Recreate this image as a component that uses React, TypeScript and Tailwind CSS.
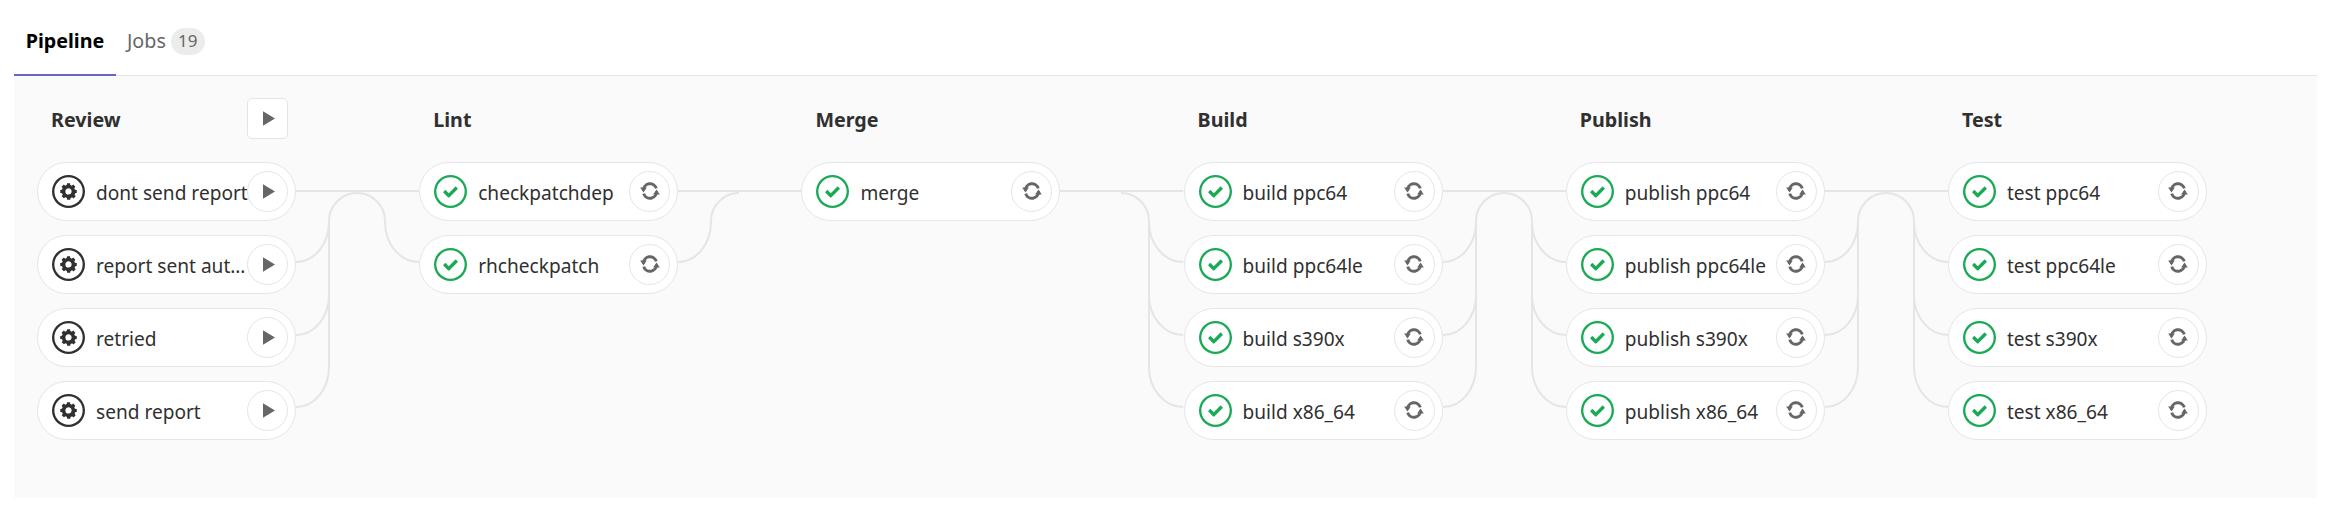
type Status = 'manual' | 'success'

interface Stage {
  title: string
  status: Status
  jobs: string[]
  action?: boolean
}

const STAGES: Stage[] = [
  { title: 'Review', status: 'manual', action: true, jobs: ['dont send report', 'report sent automatically', 'retried', 'send report'] },
  { title: 'Lint', status: 'success', jobs: ['checkpatchdep', 'rhcheckpatch'] },
  { title: 'Merge', status: 'success', jobs: ['merge'] },
  { title: 'Build', status: 'success', jobs: ['build ppc64', 'build ppc64le', 'build s390x', 'build x86_64'] },
  { title: 'Publish', status: 'success', jobs: ['publish ppc64', 'publish ppc64le', 'publish s390x', 'publish x86_64'] },
  { title: 'Test', status: 'success', jobs: ['test ppc64', 'test ppc64le', 'test s390x', 'test x86_64'] },
]

// y of each row's link inside the connector svg
const LINK_Y = [29, 100, 173, 245]

function StatusIcon({ status }: { status: Status }) {
  const color = status === 'success' ? '#1aaa55' : '#303030'
  return (
    <svg viewBox="0 0 14 14" className="h-[33px] w-[33px] shrink-0" fill={color}>
      <path fillRule="evenodd" d="M0 7a7 7 0 1 1 14 0A7 7 0 0 1 0 7zM13 7A6 6 0 1 0 1 7a6 6 0 0 0 12 0z" />
      {status === 'success' ? (
        <path d="M6.278 7.697L5.045 6.464a.296.296 0 0 0-.42-.002l-.613.614a.298.298 0 0 0 .002.42l1.91 1.909a.5.5 0 0 0 .703.005l.265-.265L9.997 6.04a.291.291 0 0 0-.009-.408l-.614-.614a.29.29 0 0 0-.408-.009L6.278 7.697z" />
      ) : (
        <path
          fillRule="evenodd"
          d="M10.5 7.63V6.37l-.787-.13c-.044-.175-.132-.349-.263-.61l.481-.652-.918-.913-.657.478a2.346 2.346 0 0 0-.612-.26L7.656 3.5H6.388l-.132.783c-.219.043-.394.13-.612.26l-.657-.478-.918.913.437.652c-.131.218-.175.392-.262.61l-.744.086v1.261l.787.13c.044.218.132.392.263.61l-.438.651.92.913.655-.434c.175.086.394.173.613.26l.131.783h1.313l.131-.783c.219-.043.394-.13.613-.26l.656.478.918-.913-.48-.652c.13-.218.218-.435.262-.61l.656-.13zM7 8.283a1.285 1.285 0 0 1-1.313-1.305c0-.739.57-1.304 1.313-1.304.744 0 1.313.565 1.313 1.304 0 .74-.57 1.305-1.313 1.305z"
        />
      )}
    </svg>
  )
}

function PlayIcon() {
  return (
    <svg viewBox="0 0 12 15" className="ml-[3px] h-[15px] w-[12px]" fill="#666">
      <path d="M0 0.2 12 7.5 0 14.8z" />
    </svg>
  )
}

function RetryIcon() {
  return (
    <svg viewBox="0 0 20 20" className="h-[20px] w-[20px]" fill="none" stroke="#666" strokeWidth="3">
      <path d="M3.4 9.5A6.6 6.6 0 0 1 16.3 7.4" />
      <path d="M16.6 10.5A6.6 6.6 0 0 1 3.7 12.6" />
      <path d="M0.2 6.6H6.8L3.5 11.4z" fill="#666" stroke="none" />
      <path d="M19.8 13.4H13.2L16.5 8.6z" fill="#666" stroke="none" />
    </svg>
  )
}

function JobPill({ name, status, action }: { name: string; status: Status; action?: boolean }) {
  return (
    <div className="relative flex h-[58.5px] w-[259px] items-center rounded-full border border-[#e5e5e5] bg-white pl-[14px]">
      <StatusIcon status={status} />
      <span className="ml-[11px] mt-[4px] w-[160px] truncate text-[19.1px] text-[#303030]">{name}</span>
      <button className="absolute right-[7px] top-[7.5px] flex h-[41px] w-[41px] items-center justify-center rounded-full border border-[#e5e5e5] bg-white">
        {action ? <PlayIcon /> : <RetryIcon />}
      </button>
    </div>
  )
}

function Connector({ from, to }: { from: number; to: number }) {
  const left = LINK_Y.slice(1, from)
  const right = LINK_Y.slice(1, to)
  const paths: string[] = ['M0 29H123.2']
  if (from > 1) {
    const last = LINK_Y[from - 1]
    paths.push(`M33 ${last - 40}V59A28 28 0 0 1 61 31`)
    left.forEach((y) => paths.push(`M0 ${y}A33 40 0 0 0 33 ${y - 40}`))
  }
  if (to > 1) {
    const last = LINK_Y[to - 1]
    paths.push(`M61 31A28 28 0 0 1 89 59V${last - 40}`)
    right.forEach((y) => paths.push(`M89 ${y - 40}A34 40 0 0 0 123.2 ${y}`))
  }
  return (
    <svg viewBox="0 0 123.2 280" className="mt-[64px] h-[280px] w-[123.2px] shrink-0" fill="none" stroke="#e5e5e5" strokeWidth="2">
      {paths.map((d) => (
        <path key={d} d={d} />
      ))}
    </svg>
  )
}

function StageColumn({ stage }: { stage: Stage }) {
  return (
    <div className="w-[259px] shrink-0">
      <div className="flex h-[41px] items-center justify-between pl-[14px] pr-[8px]">
        <span className="mt-[2px] text-[19.7px] font-bold text-[#303030]">{stage.title}</span>
        {stage.action && (
          <button className="flex h-[41px] w-[41px] items-center justify-center rounded-[5px] border border-[#e5e5e5] bg-white">
            <PlayIcon />
          </button>
        )}
      </div>
      <div className="mt-[23px] flex flex-col gap-[14.5px]">
        {stage.jobs.map((job) => (
          <JobPill key={job} name={job} status={stage.status} action={stage.action} />
        ))}
      </div>
    </div>
  )
}

export default function App() {
  return (
    <div className="h-[510px] w-[2331px] overflow-hidden bg-white px-[14px] font-['Noto_Sans',sans-serif]">
      <div className="flex h-[76px] border-b-[1.5px] border-[#e5e5e5]">
        <div className="-mb-[1.5px] flex h-[76px] w-[102px] items-center justify-center border-b-[2px] border-[#6666c4] pt-[7px] text-[19.7px] font-bold text-black">
          Pipeline
        </div>
        <div className="ml-[11px] flex items-center pt-[7px] text-[19.7px] text-[#666]">
          Jobs
          <span className="ml-[5px] flex h-[27px] w-[34px] items-center justify-center rounded-full bg-[#ececec] text-[17px]">19</span>
        </div>
      </div>
      <div className="flex h-[422px] items-start bg-[#fafafa] pl-[23px] pt-[22px]">
        {STAGES.map((stage, i) => (
          <div key={stage.title} className="flex items-start">
            <StageColumn stage={stage} />
            {i < STAGES.length - 1 && <Connector from={stage.jobs.length} to={STAGES[i + 1].jobs.length} />}
          </div>
        ))}
      </div>
    </div>
  )
}
